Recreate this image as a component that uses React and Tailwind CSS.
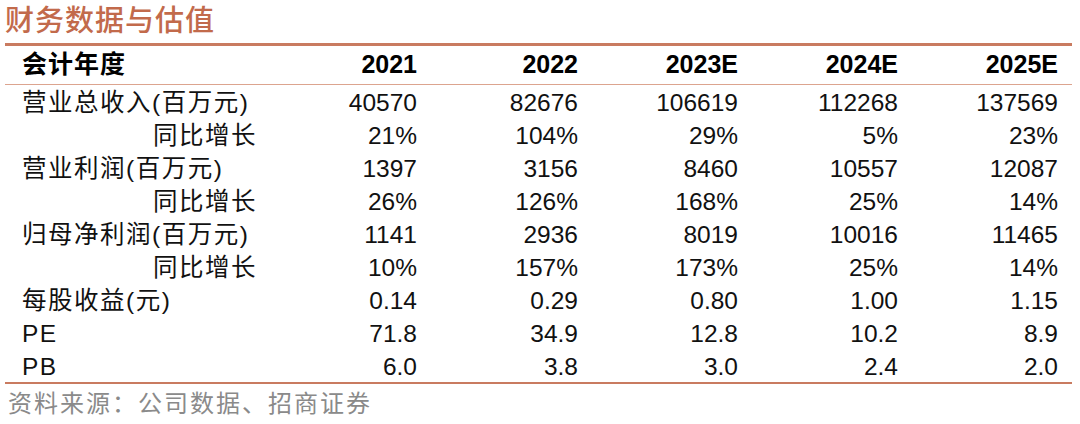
import React from "react";

const rows = [
  { label: "营业总收入(百万元)", values: ["40570", "82676", "106619", "112268", "137569"] },
  { label: "同比增长", indent: true, values: ["21%", "104%", "29%", "5%", "23%"] },
  { label: "营业利润(百万元)", values: ["1397", "3156", "8460", "10557", "12087"] },
  { label: "同比增长", indent: true, values: ["26%", "126%", "168%", "25%", "14%"] },
  { label: "归母净利润(百万元)", values: ["1141", "2936", "8019", "10016", "11465"] },
  { label: "同比增长", indent: true, values: ["10%", "157%", "173%", "25%", "14%"] },
  { label: "每股收益(元)", values: ["0.14", "0.29", "0.80", "1.00", "1.15"] },
  { label: "PE", values: ["71.8", "34.9", "12.8", "10.2", "8.9"] },
  { label: "PB", values: ["6.0", "3.8", "3.0", "2.4", "2.0"] },
];

const years = ["2021", "2022", "2023E", "2024E", "2025E"];

const font = {
  fontFamily: '"Liberation Sans", "Noto Sans CJK SC", Arial, sans-serif',
};

export default function App() {
  return (
    <div className="w-[1080px] h-[424px] bg-white overflow-hidden" style={font}>
      <div className="h-[43px] flex items-center pl-[5px]">
        <h1 className="text-[29px] leading-none font-medium text-[#c26a4b] tracking-[1px]">财务数据与估值</h1>
      </div>

      <div className="mx-[5px] w-[1067px]">
        <div className="h-[3px] bg-[#c97b60]"></div>

        <div className="grid grid-cols-[234px_161px_161px_160px_160px_160px] pl-[17px] h-[38px] items-center font-bold text-[25px] text-black">
          <div className="tracking-[1px] whitespace-nowrap">会计年度</div>
          {years.map((y) => (
            <div key={y} className="text-right">{y}</div>
          ))}
        </div>
        <div className="h-px bg-[#dca48f]"></div>

        {rows.map((r, i) => (
          <div
            key={i}
            className="grid grid-cols-[234px_161px_161px_160px_160px_160px] pl-[17px] h-[33px] items-center text-[24.5px] text-[#111]"
          >
            <div className={r.indent ? "pl-[131px] tracking-[1.5px] whitespace-nowrap" : "tracking-[1.5px] whitespace-nowrap"}>
              {r.label}
            </div>
            {r.values.map((v, j) => (
              <div key={j} className="text-right">{v}</div>
            ))}
          </div>
        ))}

        <div className="h-[2px] bg-[#c97b60]"></div>
      </div>

      <div className="h-[40px] flex items-center pl-[8px] text-[24px] text-[#8a8a8a] tracking-[2px] whitespace-nowrap">
        资料来源：公司数据、招商证券
      </div>
    </div>
  );
}
